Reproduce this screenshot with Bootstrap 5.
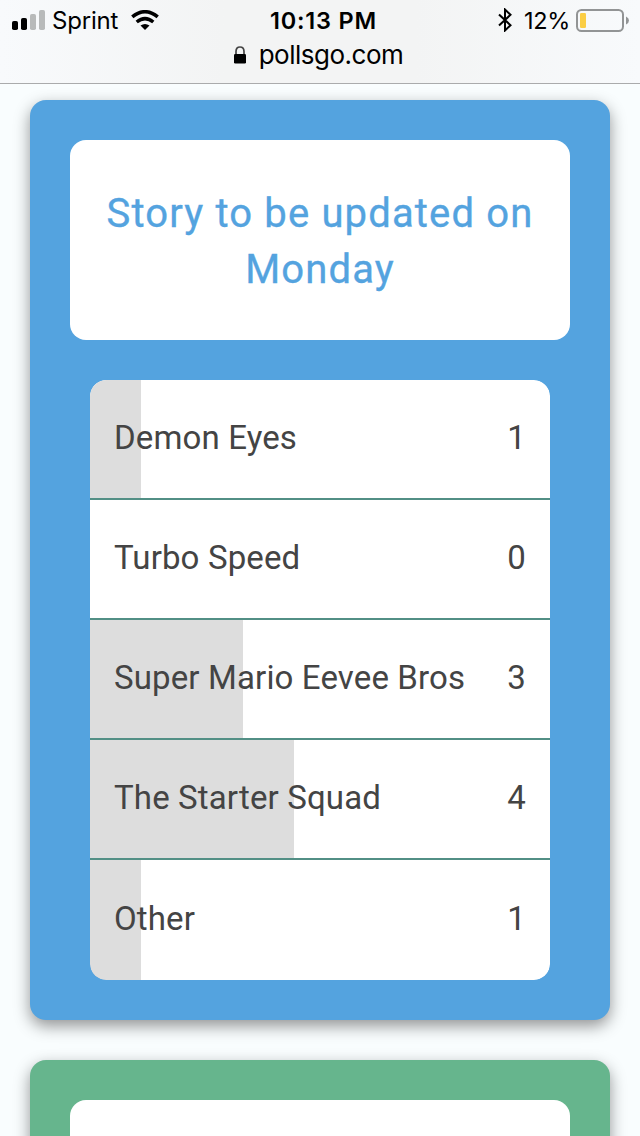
<!DOCTYPE html>
<html lang="en">
<head>
<meta charset="utf-8">
<meta name="viewport" content="width=device-width, initial-scale=1">
<title>pollsgo.com</title>
<link rel="stylesheet" href="https://cdn.jsdelivr.net/npm/bootstrap@5.3.0/dist/css/bootstrap.min.css">
<style>
body{background:#f9fdfe;font-family:Roboto,"Noto Sans",sans-serif;color:#444}
.topbar{height:84px;background:linear-gradient(90deg,#f8fafc,#f3f4f4 35%,#f3f4f4 65%,#f8fafc);border-bottom:1px solid #aaabac;color:#000;font-family:Inter,sans-serif}
.status-row{height:40px;font-size:24px;line-height:40px;padding-left:12px;padding-right:11px}
.status-row > div{flex:1 1 0}
.status-row span{padding-top:1px}
.carrier{margin-left:7px;margin-right:13px;letter-spacing:-.2px}
.clock{font-weight:600;font-size:23.5px;letter-spacing:.8px;margin-left:6px}
.charge{font-size:23.5px;letter-spacing:-.3px;margin-left:12px;margin-right:6px}
.address{height:30px;line-height:30px;font-size:26px;letter-spacing:-.5px}
.polls{height:1052px;gap:40px;padding:16px 30px 0}
.poll{border-radius:16px;padding:40px;box-shadow:0 6px 16px rgba(0,0,0,.42)}
.poll-blue{background:#54a3df}
.poll-green{background:#66b58d;height:200px}
.question{background:#fff;border-radius:16px;height:200px;color:#54a3df;font-size:40px;-webkit-text-stroke:.35px #54a3df;line-height:56px;padding-top:3px;letter-spacing:1.15px}
.answers{margin:40px 20px 0;overflow:hidden;--bs-list-group-border-radius:16px}
.answer{height:120px;padding:0 24px 2px;border:0;border-bottom:2px solid #528f85;font-size:33px;line-height:40px;color:#444;letter-spacing:.14px;background:linear-gradient(#ddd,#ddd) 0 0/var(--share) 100% no-repeat #fff}
.answer:last-child{border-bottom:0}
</style>
<script src="https://cdn.jsdelivr.net/npm/bootstrap@5.3.0/dist/js/bootstrap.bundle.min.js"></script>
</head>
<body>
<header class="topbar">
  <div class="status-row d-flex align-items-center">
    <div class="d-flex align-items-center">
      <svg width="33" height="20" viewBox="0 0 33 20"><rect y="11" width="6" height="9" rx="1.8"/><rect x="9" y="8" width="6" height="12" rx="1.8"/><rect x="18" y="4" width="6" height="16" rx="1.8" fill="#b8baba"/><rect x="27" width="6" height="20" rx="1.8" fill="#b8baba"/></svg>
      <span class="carrier">Sprint</span>
      <svg width="28" height="20" viewBox="0 0 28 20"><path d="M1.300 6.900Q14-3.400 26.700 6.900" fill="none" stroke="#000" stroke-width="3.600"/><path d="M5.700 12Q14 5.300 22.300 12" fill="none" stroke="#000" stroke-width="3.500"/><path d="M9.500 15.600Q14 12.200 18.500 15.600L14 20Z"/></svg>
    </div>
    <span class="clock">10:13 PM</span>
    <div class="d-flex align-items-center justify-content-end">
      <svg width="14" height="24" viewBox="0 0 14 24"><path d="M1 6.500 12.500 17.200 7 22.500V1.500L12.500 6.800 1 17.500" fill="none" stroke="#000" stroke-width="2"/></svg>
      <span class="charge">12%</span>
      <svg width="53" height="24" viewBox="0 0 53 24"><rect x="1" y="2" width="46" height="21" rx="4.500" fill="none" stroke="#929495" stroke-width="2"/><rect x="4" y="5" width="6" height="15" rx="1.300" fill="#fbce45"/><path d="M50 8.500Q53 10 53 12.500T50 16.500Z" fill="#929495"/></svg>
    </div>
  </div>
  <div class="address d-flex align-items-center justify-content-center">
    <svg class="me-2" width="14" height="18" viewBox="0 0 14 18"><path d="M3 9V5.500Q3 1 7 1T11 5.500V9" fill="none" stroke="#444" stroke-width="1.700"/><rect x="1" y="8" width="12" height="9.500" rx="1.300"/></svg>
    <span class="ms-1 pe-1 me-n1">pollsgo.com</span>
  </div>
</header>
<main class="polls d-flex flex-column overflow-hidden">
  <section class="poll poll-blue flex-shrink-0">
    <div class="question d-flex align-items-center justify-content-center text-center"><span>Story to be updated on<br>Monday</span></div>
    <ul class="list-group answers">
      <li class="list-group-item answer d-flex align-items-center justify-content-between" style="--share:11.11%"><span>Demon Eyes</span><span>1</span></li>
      <li class="list-group-item answer d-flex align-items-center justify-content-between" style="--share:0%"><span>Turbo Speed</span><span>0</span></li>
      <li class="list-group-item answer d-flex align-items-center justify-content-between" style="--share:33.33%"><span>Super Mario Eevee Bros</span><span>3</span></li>
      <li class="list-group-item answer d-flex align-items-center justify-content-between" style="--share:44.44%"><span>The Starter Squad</span><span>4</span></li>
      <li class="list-group-item answer d-flex align-items-center justify-content-between" style="--share:11.11%"><span>Other</span><span>1</span></li>
    </ul>
  </section>
  <section class="poll poll-green flex-shrink-0"><div class="question"></div></section>
</main>
</body>
</html>
